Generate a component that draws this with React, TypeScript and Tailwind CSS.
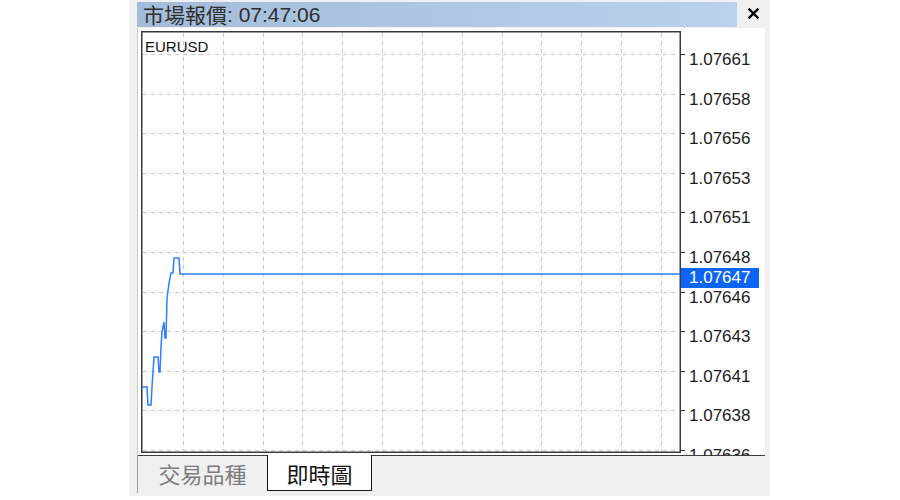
import React from "react";

const hY = Array.from({ length: 11 }, (_, k) => Math.round(26 + 39.6 * k) + 0.5);
const vX = Array.from({ length: 13 }, (_, k) => Math.round(45 + 39.83 * k) + 0.5);
const labels = [
  "1.07661",
  "1.07658",
  "1.07656",
  "1.07653",
  "1.07651",
  "1.07648",
  "1.07646",
  "1.07643",
  "1.07641",
  "1.07638",
  "1.07636",
];
const pts: [number, number][] = [
  [4, 359], [9, 359], [10, 377], [13, 377], [14, 359], [15, 344], [16, 329],
  [20, 329], [21, 344], [22, 344], [23, 319], [24, 304], [26, 294], [27, 310],
  [28, 310], [29, 270], [31, 255], [33, 245], [35, 245], [36, 230], [41, 230],
  [42, 246], [542, 246],
];

const latin = { fontFamily: '"Liberation Sans", "Noto Sans CJK TC", sans-serif' };
const cjk = { fontFamily: '"Noto Sans CJK TC", "Liberation Sans", sans-serif' };

export default function App() {
  return (
    <div className="w-[900px] h-[500px] bg-white flex">
      <div className="ml-[129px] w-[641px] h-[496px] bg-[#f0f0f0] flex flex-col">
        {/* title row */}
        <div className="h-[28px] pt-[2px] flex">
          <div className="ml-[8px] w-[600px] h-[25px] bg-gradient-to-r from-[#a2bcda] to-[#bad2eb] flex items-center pl-[6px] text-[#2e2e2e]">
            <span className="text-[21px] leading-none" style={cjk}>市場報價</span>
            <span className="text-[21px] leading-none" style={latin}>: 07:47:06</span>
          </div>
          <div className="flex-1 flex items-center justify-center pb-[3px]">
            <svg width="11" height="11" viewBox="0 0 11 11">
              <path d="M1.5 1.5 L9.5 9.5 M9.5 1.5 L1.5 9.5" stroke="#000" strokeWidth="2.4" strokeLinecap="square" />
            </svg>
          </div>
        </div>
        {/* chart */}
        <div className="ml-[8px] w-[628px] h-[427px] bg-white relative overflow-hidden border-l border-[#c8c8c8]">
          <svg className="absolute left-0 top-0" width="628" height="427">
            {hY.map((y, i) => (
              <line key={"h" + i} x1={5} x2={541} y1={y} y2={y} stroke="#c9c9c9" strokeDasharray="4 4" />
            ))}
            {vX.map((x, i) => (
              <line key={"v" + i} x1={x} x2={x} y1={5} y2={423} stroke="#c9c9c9" strokeDasharray="4 4" />
            ))}
            {hY.map((y, i) => (
              <line key={"t" + i} x1={543} x2={547} y1={y} y2={y} stroke="#303030" />
            ))}
            <rect x={3.75} y={3.75} width={538.5} height={420.5} fill="none" stroke="#3a3a3a" strokeWidth={1.5} />
            <polyline
              points={pts.map((p) => p.join(",")).join(" ")}
              fill="none"
              stroke="#2f7cff"
              strokeWidth={1.5}
            />
          </svg>
          <div className="absolute left-[7px] top-[11px] text-[15px] leading-none text-[#111]" style={latin}>
            EURUSD
          </div>
          {labels.map((l, i) => (
            <div
              key={l}
              className="absolute left-[551px] text-[17px] leading-none text-[#1c1c1c]"
              style={{ ...latin, top: hY[i] - 4 }}
            >
              {l}
            </div>
          ))}
          <div
            className="absolute left-[543px] top-[240px] w-[78px] h-[20px] bg-[#0d65f6] text-white text-[17px] leading-[20px] pl-[8px]"
            style={latin}
          >
            1.07647
          </div>
        </div>
        {/* tab bar */}
        <div className="ml-[8px] w-[628px] h-[38px] flex border-l border-[#a0a0a0]">
          <div className="w-[129px] h-full border-t border-[#3c3c3c] flex items-center justify-center pb-[3px]">
            <span className="text-[22px] leading-none text-[#7c7c7c]" style={cjk}>交易品種</span>
          </div>
          <div className="w-[105px] h-[36px] bg-white border-x border-b border-[#1a1a1a] flex items-center justify-center">
            <span className="text-[22px] leading-none text-[#111]" style={cjk}>即時圖</span>
          </div>
          <div className="flex-1 h-full border-t border-[#3c3c3c]" />
        </div>
      </div>
    </div>
  );
}
